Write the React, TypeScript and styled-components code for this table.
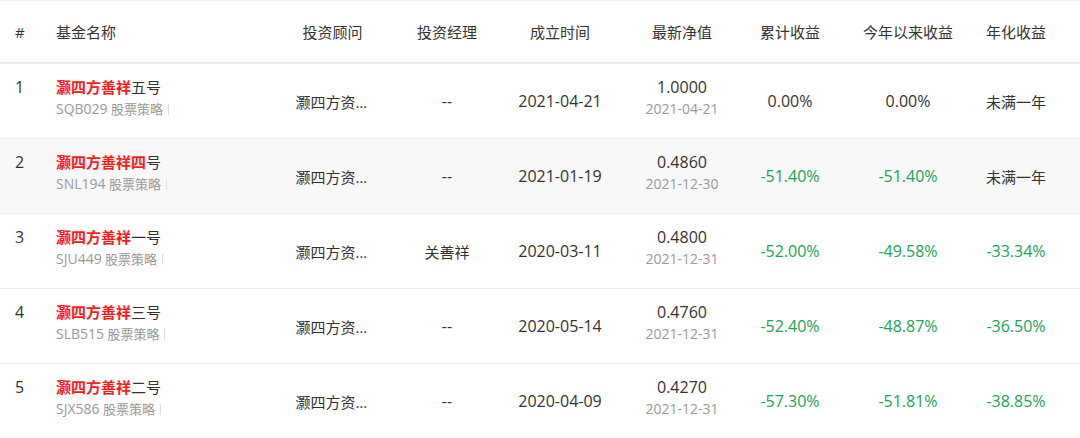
import React from "react"
import styled, { createGlobalStyle } from "styled-components"

type Fund = {
  no: number
  hit: string
  rest: string
  code: string
  advisor: string
  manager: string
  since: string
  nav: string
  navDate: string
  total: string
  ytd: string
  annual: string
  shaded?: boolean
}

const funds: Fund[] = [
  { no: 1, hit: "灏四方善祥", rest: "五号", code: "SQB029", advisor: "灏四方资产管理", manager: "--", since: "2021-04-21", nav: "1.0000", navDate: "2021-04-21", total: "0.00%", ytd: "0.00%", annual: "未满一年" },
  { no: 2, hit: "灏四方善祥四", rest: "号", code: "SNL194", advisor: "灏四方资产管理", manager: "--", since: "2021-01-19", nav: "0.4860", navDate: "2021-12-30", total: "-51.40%", ytd: "-51.40%", annual: "未满一年", shaded: true },
  { no: 3, hit: "灏四方善祥", rest: "一号", code: "SJU449", advisor: "灏四方资产管理", manager: "关善祥", since: "2020-03-11", nav: "0.4800", navDate: "2021-12-31", total: "-52.00%", ytd: "-49.58%", annual: "-33.34%" },
  { no: 4, hit: "灏四方善祥", rest: "三号", code: "SLB515", advisor: "灏四方资产管理", manager: "--", since: "2020-05-14", nav: "0.4760", navDate: "2021-12-31", total: "-52.40%", ytd: "-48.87%", annual: "-36.50%" },
  { no: 5, hit: "灏四方善祥", rest: "二号", code: "SJX586", advisor: "灏四方资产管理", manager: "--", since: "2020-04-09", nav: "0.4270", navDate: "2021-12-31", total: "-57.30%", ytd: "-51.81%", annual: "-38.85%" },
]

const GlobalStyle = createGlobalStyle`
  body {
    margin: 0;
    background: #fff;
    font-family: "Open Sans", "Noto Sans", "Noto Sans CJK SC", sans-serif;
    color: #333;
  }
`

const cols = "45px 230px 115px 114px 112px 132px 84px 152px 64px 1fr"

const Table = styled.div`
  width: 1080px;
  border-top: 1px solid #f2f2f2;
`

const HeadRow = styled.div`
  display: grid;
  grid-template-columns: ${cols};
  height: 61px;
  align-items: center;
  border-bottom: 2px solid #ececec;
  font-size: 15px;
  color: #333;
`

const Row = styled.div<{ $shaded?: boolean }>`
  display: grid;
  grid-template-columns: ${cols};
  height: 74px;
  align-items: center;
  border-bottom: 1px solid #ececec;
  background: ${(p) => (p.$shaded ? "#f8f8f8" : "#fff")};
  font-size: 15px;
`

const Cell = styled.div<{ $left?: boolean; $pad?: number; $num?: boolean }>`
  text-align: ${(p) => (p.$left ? "left" : "center")};
  padding-left: ${(p) => p.$pad ?? 0}px;
  white-space: nowrap;
  font-size: ${(p) => (p.$num ? "16px" : "15px")};
`

const TopCell = styled(Cell)`
  align-self: start;
  padding-top: 13px;
  line-height: 21px;
`

const Clip = styled.span`
  display: inline-block;
  max-width: 74px;
  overflow: hidden;
  text-overflow: ellipsis;
  vertical-align: middle;
`

const Hit = styled.span`
  color: #ff1a1a;
  font-weight: 700;
`

const Sub = styled.div<{ $num?: boolean }>`
  font-size: ${(p) => (p.$num ? "14px" : "13px")};
  color: #999;
  line-height: 21px;
`

const Code = styled.span`
  font-size: 14px;
`

const Bar = styled.span`
  display: inline-block;
  width: 1px;
  height: 11px;
  background: #ddd;
  margin-left: 5px;
  vertical-align: -1px;
`

const Ratio = styled(Cell)<{ $neg?: boolean }>`
  color: ${(p) => (p.$neg ? "#1aa35c" : "#333")};
`

const isNum = (v: string) => /^[-\d]/.test(v)

export default function App() {
  return (
    <>
      <GlobalStyle />
      <Table>
        <HeadRow>
          <Cell $left $pad={15}>#</Cell>
          <Cell $left $pad={11}>基金名称</Cell>
          <Cell>投资顾问</Cell>
          <Cell>投资经理</Cell>
          <Cell>成立时间</Cell>
          <Cell>最新净值</Cell>
          <Cell>累计收益</Cell>
          <Cell>今年以来收益</Cell>
          <Cell>年化收益</Cell>
          <div />
        </HeadRow>
        {funds.map((f) => (
          <Row key={f.no} $shaded={f.shaded}>
            <TopCell $left $pad={15} $num>{f.no}</TopCell>
            <TopCell $left $pad={11}>
              <div>
                <Hit>{f.hit}</Hit>
                {f.rest}
              </div>
              <Sub>
                <Code>{f.code}</Code> 股票策略
                <Bar />
              </Sub>
            </TopCell>
            <Cell>
              <Clip>{f.advisor}</Clip>
            </Cell>
            <Cell $num={isNum(f.manager)}>{f.manager}</Cell>
            <Cell $num>{f.since}</Cell>
            <TopCell $num>
              <div>{f.nav}</div>
              <Sub $num>{f.navDate}</Sub>
            </TopCell>
            <Ratio $num $neg={f.total.startsWith("-")}>{f.total}</Ratio>
            <Ratio $num $neg={f.ytd.startsWith("-")}>{f.ytd}</Ratio>
            <Ratio $num={isNum(f.annual)} $neg={f.annual.startsWith("-")}>{f.annual}</Ratio>
            <div />
          </Row>
        ))}
      </Table>
    </>
  )
}
